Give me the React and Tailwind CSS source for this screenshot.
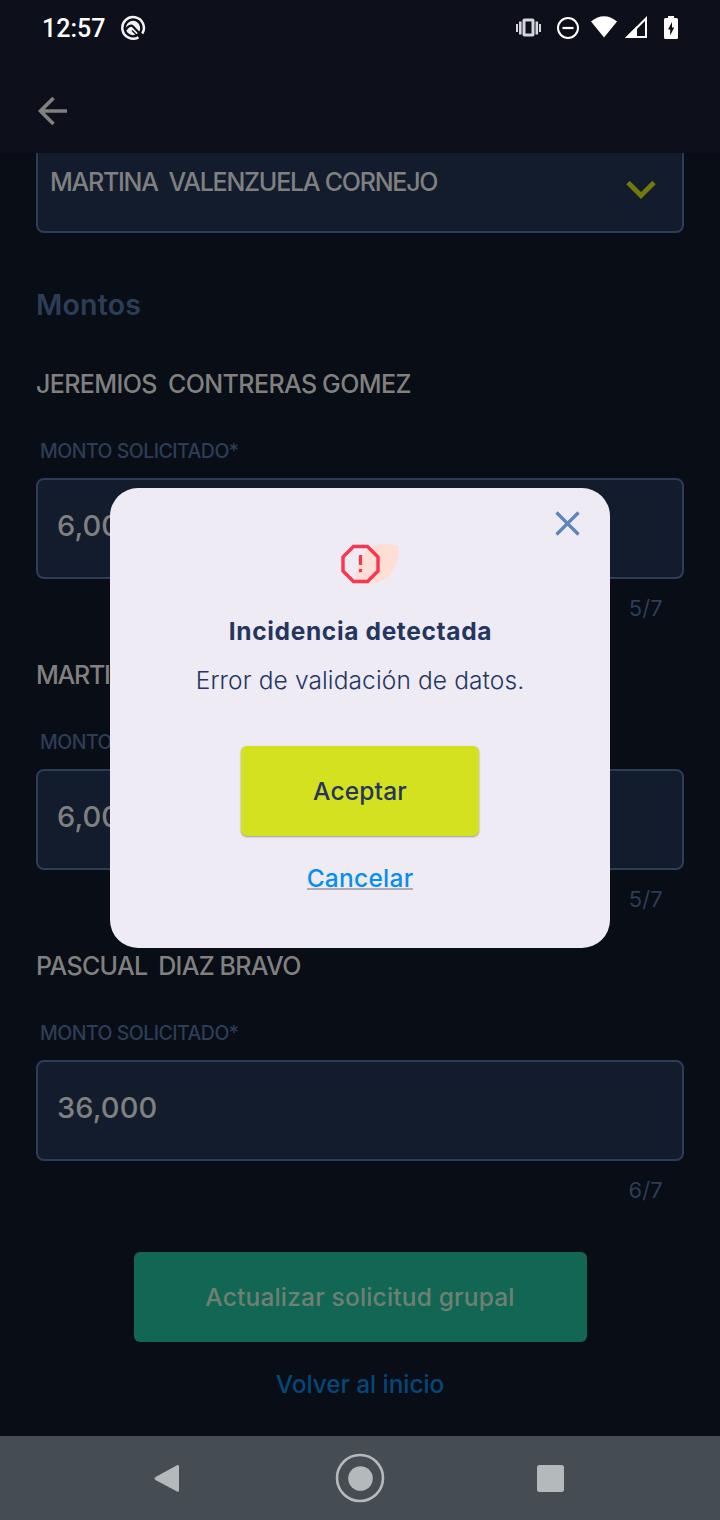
function StatusBar() {
  return (
    <div className="flex h-[56px] items-center pl-[42px] pr-[40px]">
      <span className="mt-[2px] font-['Roboto'] text-[25px] font-medium leading-[30px] text-white">12:57</span>
      <svg className="mb-px ml-[15px]" width="26" height="26" viewBox="0 0 26 26" fill="none">
        <path d="M18.500 22.300A10.800 10.800 0 1 1 22.300 18.600" stroke="#f2f2f4" strokeWidth="2.500" />
        <circle cx="13" cy="13" r="7.200" fill="#f2f2f4" />
        <path d="M5 15.500Q10 8.500 13 11.500L22.500 21.500" stroke="#0d0f1a" strokeWidth="2.200" />
        <path d="M12 15.500L17 20.500" stroke="#0d0f1a" strokeWidth="1.200" />
      </svg>
      <svg className="ml-auto" width="164" height="30" viewBox="516 13 164 30">
        <g fill="#d4d6dc">
          <rect x="516" y="24" width="2" height="8" />
          <rect x="519" y="21.500" width="2.600" height="13" />
          <rect x="535.500" y="21.500" width="2.600" height="13" />
          <rect x="539" y="24" width="2" height="8" />
          <path fillRule="evenodd" d="M524.500 18.500h8a2 2 0 0 1 2 2v14a2 2 0 0 1-2 2h-8a2 2 0 0 1-2-2v-14a2 2 0 0 1 2-2zM525.500 21.500v12h6v-12z" />
        </g>
        <circle cx="568" cy="28" r="10" fill="none" stroke="#fff" strokeWidth="2" />
        <path d="M562.500 28h11" stroke="#fff" strokeWidth="2.200" />
        <path d="M591 21.500Q604 11 617 21.500L604 37.500z" fill="#fff" />
        <path d="M627.500 37L646 18.500V37z" fill="none" stroke="#fff" strokeWidth="2" />
        <path d="M625 38L637 26V38z" fill="#fff" />
        <path d="M668 16h6v2h2.500a1.500 1.500 0 0 1 1.500 1.500v18a1.500 1.500 0 0 1-1.500 1.500h-11a1.500 1.500 0 0 1-1.500-1.500v-18a1.500 1.500 0 0 1 1.500-1.500h2.500z" fill="#fff" />
        <path d="M672 22l-4 7.500h2.200v6l4-8h-2.200z" fill="#0d0f1a" />
      </svg>
    </div>
  );
}

function AmountField({ name, nameClass, value, count }) {
  return (
    <section className="h-[291px]">
      <h3 className={`h-[36px] whitespace-pre text-[25px] font-medium leading-[36px] text-[#808080] ${nameClass}`}>{name}</h3>
      <div className="mt-[35px] h-[28px] pl-[4px] text-[19.5px] font-medium leading-[28px] tracking-[-0.52px] text-[#2c3e57]">
        MONTO SOLICITADO*
      </div>
      <div className="mt-[13px] h-[101px] rounded-[8px] border-2 border-[#2c3e57] bg-[#131c2d] pl-[19px] pt-[26px] text-[29px] font-medium leading-[40px] tracking-[0.1px] text-[#808080]">
        {value}
      </div>
      <div className="mt-[13px] pr-[21px] text-right text-[22px] font-normal leading-[32px] tracking-[0.2px] text-[#2c3e57]">{count}</div>
    </section>
  );
}

function Dialog() {
  return (
    <div className="absolute left-[110px] top-[488px] flex h-[460px] w-[500px] flex-col items-center rounded-[28px] bg-[#eeebf5]">
      <svg className="absolute left-[444px] top-[22px]" width="28" height="28" viewBox="0 0 28 28">
        <path d="M2.500 2.500L24.500 24.500M24.500 2.500L2.500 24.500" stroke="#5f84b8" strokeWidth="3.200" />
      </svg>
      <svg className="ml-[20px] mt-[55px]" width="60" height="42" viewBox="340 543 60 42">
        <path d="M355.500 583C354.500 562 364 544 386 544Q396 544 398.500 547C400 560 393 578 377 582.500Q366 585 355.500 583z" fill="#ffded6" />
        <path d="M353.500 546.500h14l10.500 10.500v14l-10.500 10.500h-14l-10.500-10.500v-14z" fill="none" stroke="#fb3450" strokeWidth="3.400" />
        <path d="M360.500 555v10M360.500 569v3.200" stroke="#fb3450" strokeWidth="3.200" />
      </svg>
      <h2 className="mt-[28px] h-[36px] pl-px text-[24.5px] font-bold leading-[36px] tracking-[0.65px] text-[#24365f]">Incidencia detectada</h2>
      <p className="mt-[13px] h-[36px] text-[24.5px] font-light leading-[36px] tracking-[0.12px] text-[#24365f]">Error de validación de datos.</p>
      <button className="mt-[48px] h-[90px] w-[238px] rounded-[6px] bg-[#d4e11e] text-[24.5px] font-medium leading-[36px] tracking-[0.15px] text-[#24365f] shadow-[0_1px_2px_rgba(0,0,0,0.35)]">Aceptar</button>
      <a className="mt-[25px] h-[29px] border-b-2 border-[#aeabb8] text-[24.5px] font-medium leading-[34px] tracking-[0.25px] text-[#078ff0]">Cancelar</a>
    </div>
  );
}

export default function App() {
  return (
    <div className="relative flex h-[1520px] w-[720px] flex-col overflow-hidden bg-[#090d15] font-['Inter',sans-serif]">
      <header className="h-[153px] shrink-0 bg-[#0d0f1a]">
        <StatusBar />
        <svg className="ml-[36px] mt-[38px]" width="34" height="34" viewBox="0 0 34 34" fill="none" stroke="#808080" strokeWidth="3.600">
          <path d="M17.500 4L4.500 17L17.500 30M4.500 17H31" />
        </svg>
      </header>
      <main className="h-[1283px] shrink-0 px-[36px]">
        <div className="flex h-[80px] justify-between rounded-b-[8px] border-2 border-t-0 border-[#2c3e57] bg-[#131c2d] pl-[12px] pr-[26px]">
          <span className="mt-[11px] whitespace-pre text-[25px] font-medium leading-[36px] tracking-[-1.25px] text-[#808080]">{"MARTINA  VALENZUELA CORNEJO"}</span>
          <svg className="mt-[26px]" width="30" height="22" viewBox="0 0 30 22">
            <path d="M2 3.500L15 16.500L28 3.500" fill="none" stroke="#74790d" strokeWidth="4.800" />
          </svg>
        </div>
        <h2 className="mt-[51px] h-[42px] text-[28.5px] font-semibold leading-[42px] tracking-[0.2px] text-[#2c3e57]">Montos</h2>
        <div className="mt-[40px]">
          <AmountField name={"JEREMIOS  CONTRERAS GOMEZ"} nameClass="tracking-[-0.6px] [word-spacing:-0.5px]" value="6,000" count="5/7" />
          <AmountField name={"MARTINA  VALENZUELA CORNEJO"} nameClass="tracking-[-1.25px]" value="6,000" count="5/7" />
          <AmountField name={"PASCUAL  DIAZ BRAVO"} nameClass="tracking-[-0.65px] [word-spacing:-0.7px]" value="36,000" count="6/7" />
        </div>
        <div className="mt-[13px] flex flex-col items-center">
          <button className="h-[90px] w-[453px] rounded-[6px] bg-[#126654] text-[24.5px] font-medium tracking-[0.18px] text-[#6f8073]">Actualizar solicitud grupal</button>
          <a className="mt-[24px] text-[24.5px] font-medium leading-[36px] tracking-[-0.1px] text-[#044779]">Volver al inicio</a>
        </div>
      </main>
      <nav className="h-[84px] shrink-0 bg-[#454d53]">
        <svg width="720" height="84" viewBox="0 1436 720 84" fill="#b4b9bb">
          <path d="M155.500 1477L177 1465.200Q179 1464.500 179 1466.500V1490.500Q179 1492.500 177 1491.500L155.500 1480Q153.500 1478.500 155.500 1477z" />
          <circle cx="360" cy="1478" r="23" fill="none" stroke="#b4b9bb" strokeWidth="2.600" />
          <circle cx="360.500" cy="1478.500" r="12.300" />
          <rect x="537" y="1465" width="27" height="27" rx="2.500" />
        </svg>
      </nav>
      <Dialog />
    </div>
  );
}
